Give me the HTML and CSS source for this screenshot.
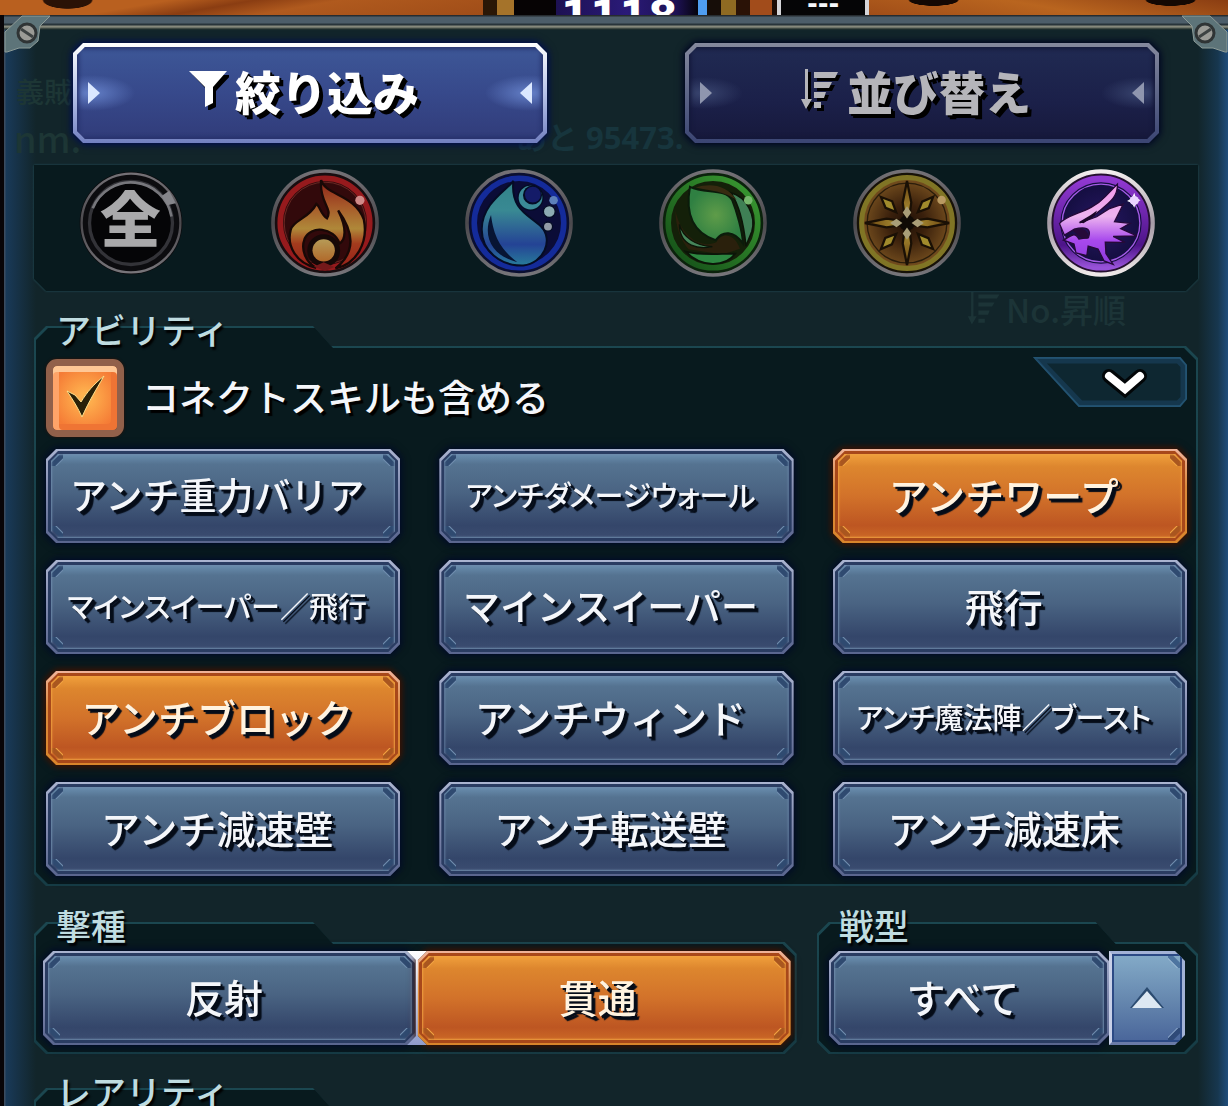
FILE: index.html
```html
<!DOCTYPE html>
<html lang="ja">
<head>
    <meta charset="UTF-8">
    <meta name="viewport" content="width=device-width, initial-scale=1.0">
    <title>絞り込み</title>
    <link rel="stylesheet" href="styles.css">
</head>
<body>
    <header class="game-bar">
        <div class="bar-side"></div>
        <div class="bar-gold"></div>
        <div class="bar-count">1118</div>
        <div class="bar-stripes"></div>
        <div class="bar-slot">---</div>
        <div class="bar-side"></div>
    </header>

    <main class="dialog">
        <!-- faded screen behind the dialog -->
        <div class="ghost" aria-hidden="true">
            <span class="ghost-title">義賊</span>
            <span class="ghost-name">nm.</span>
            <span class="ghost-rest">あと 95473.</span>
            <span class="ghost-sort">
                <svg width="40" height="42" viewBox="0 0 40 42"><path d="M4 0H7V30H11L5 40L0 30H4ZM13 3H39L36 8H13ZM13 13H33L30 18H13ZM13 23H27L25 28H13ZM13 33H21V38H13Z" fill="currentColor"/></svg>No.昇順
            </span>
        </div>

        <svg class="corner corner-left" viewBox="0 0 46 38">
            <path d="M18 1H46L36 11L34 26L26 33H15L3 37H1V17Z" fill="#5d7479" stroke="#8d9b97" stroke-width="1"/>
            <circle cx="23" cy="18" r="9" fill="#9b9b96" stroke="#2f3435" stroke-width="3"/>
            <path d="M17 14L29 22" stroke="#3d4242" stroke-width="3"/>
        </svg>
        <svg class="corner corner-right" viewBox="0 0 46 38">
            <path d="M18 1H46L36 11L34 26L26 33H15L3 37H1V17Z" fill="#5d7479" stroke="#8d9b97" stroke-width="1"/>
            <circle cx="23" cy="18" r="9" fill="#9b9b96" stroke="#2f3435" stroke-width="3"/>
            <path d="M17 14L29 22" stroke="#3d4242" stroke-width="3"/>
        </svg>

        <nav class="tabs">
            <button class="tab tab-active" type="button">
                <span class="tab-face">
                    <svg width="40" height="40" viewBox="0 0 40 40"><path d="M4 5H42L27 21V37L19 41V21Z" fill="#000"/><path d="M0 1H38L24 17V33L16 37V17Z" fill="#fff"/></svg>
                    絞り込み
                </span>
            </button>
            <button class="tab" type="button">
                <span class="tab-face">
                    <svg width="40" height="46" viewBox="0 0 40 46">
                        <path d="M4 2H7V32H11L5 42L0 32H4ZM13 5H37L34 11H13ZM13 15H31L28 21H13ZM13 25H25L23 31H13ZM13 35H20V41H13Z" fill="#000" transform="translate(3 3)"/>
                        <path d="M4 2H7V32H11L5 42L0 32H4ZM13 5H37L34 11H13ZM13 15H31L28 21H13ZM13 25H25L23 31H13ZM13 35H20V41H13Z" fill="#b5b5ba"/>
                    </svg>
                    並び替え
                </span>
            </button>
        </nav>

        <section class="elements">
            <button class="element" type="button" aria-label="全">
                <svg viewBox="138 26 328 328">
                    <circle cx="302" cy="190" r="156" fill="#0c0c0f"/>
                    <circle cx="302" cy="190" r="150" fill="none" stroke="url(#steel)" stroke-width="7"/>
                    <circle cx="302" cy="190" r="126" fill="#050507" stroke="#333338" stroke-width="10"/>
                    <path d="M186 145A125 125 0 0 1 425 170" fill="none" stroke="#77777c" stroke-width="8"/>
                    <path d="M395 108L418 92L438 130L412 136Z" fill="#85858a"/>
                    <text x="300" y="247" text-anchor="middle" class="all-mark">全</text>
                </svg>
            </button>
            <button class="element" type="button" aria-label="火">
                <svg viewBox="716 24 328 328">
                    <circle cx="880" cy="188" r="158" fill="#180d10" stroke="url(#steel)" stroke-width="11"/>
                    <circle cx="880" cy="188" r="136" fill="#32090b" stroke="#961a1d" stroke-width="17"/>
                    <circle cx="880" cy="188" r="124" fill="none" stroke="#6b2924" stroke-width="3"/>
                    <path d="M868 58C882 105 970 100 998 178C1012 248 975 313 912 326C964 285 976 227 920 150C948 206 942 240 924 250C907 201 836 194 818 236C805 270 823 308 853 324C794 310 762 260 776 208C786 177 830 176 854 130C864 137 868 163 886 174C905 143 862 127 868 58Z" fill="url(#flame)" stroke="#190806" stroke-width="7"/>
                    <circle cx="876" cy="272" r="50" fill="#160807"/>
                    <circle cx="876" cy="271" r="34" fill="url(#ember)"/>
                    <path d="M846 321L876 307L908 322L880 334Z" fill="#74191a"/>
                    <circle cx="986" cy="119" r="14" fill="#d08a88"/>
                </svg>
            </button>
            <button class="element" type="button" aria-label="水">
                <svg viewBox="69 24 328 328">
                    <circle cx="233" cy="188" r="158" fill="#0b0f30" stroke="url(#steel)" stroke-width="11"/>
                    <circle cx="233" cy="188" r="136" fill="#0b0c37" stroke="#142b9a" stroke-width="17"/>
                    <path d="M216 60C196 88 122 127 120 205C118 272 176 319 246 317C306 311 340 240 300 199C262 163 206 146 216 60Z" fill="url(#drop)" stroke="#050c25" stroke-width="6"/>
                    <path d="M148 164C121 229 150 287 228 307C180 270 157 235 148 164Z" fill="#071433"/>
                    <circle cx="268" cy="111" r="40" fill="#050c25"/>
                    <circle cx="268" cy="111" r="36" fill="#3b8a98"/>
                    <circle cx="274" cy="103" r="29" fill="#050c25"/>
                    <circle cx="275" cy="102" r="24" fill="#141b68"/>
                    <circle cx="325" cy="153" r="18" fill="#8dabb3" stroke="#050c25" stroke-width="4"/>
                    <circle cx="321" cy="199" r="14" fill="#939ba6" stroke="#050c25" stroke-width="4"/>
                    <circle cx="338" cy="119" r="13" fill="#5d80bb"/>
                </svg>
            </button>
            <button class="element" type="button" aria-label="木">
                <svg viewBox="650 24 328 328">
                    <circle cx="814" cy="188" r="158" fill="#0b220c" stroke="url(#steel)" stroke-width="11"/>
                    <circle cx="814" cy="188" r="136" fill="#142009" stroke="url(#wood)" stroke-width="17"/>
                    <path d="M868 96C915 108 946 165 932 214L914 258C908 198 898 140 868 96Z" fill="#3f8055" stroke="#0b1508" stroke-width="5"/>
                    <path d="M700 150C715 230 780 268 825 246C837 219 876 214 896 266L844 284L740 268C716 240 700 200 700 150Z" fill="#2a200c"/>
                    <path d="M712 192C722 232 764 258 812 260C775 268 712 262 712 192Z" fill="#46855a" stroke="#0b1508" stroke-width="4"/>
                    <path d="M731 275C781 288 831 281 882 281C850 323 779 324 731 275Z" fill="#2d8841" stroke="#0b1508" stroke-width="5"/>
                    <path d="M744 78C790 100 850 82 872 118C886 153 903 211 905 250C877 210 843 211 822 240C750 216 730 157 744 78Z" fill="url(#leaf)" stroke="#0b1b0b" stroke-width="6"/>
                    <path d="M762 80C808 65 855 73 886 118C849 92 811 90 762 80Z" fill="#372b11"/>
                    <circle cx="921" cy="119" r="13" fill="#76b86d"/>
                </svg>
            </button>
            <button class="element" type="button" aria-label="光">
                <svg viewBox="95 24 328 328">
                    <circle cx="259" cy="188" r="158" fill="#171208" stroke="url(#steel)" stroke-width="11"/>
                    <circle cx="259" cy="188" r="138" fill="url(#amber)" stroke="#807525" stroke-width="15"/>
                    <circle cx="259" cy="188" r="121" fill="none" stroke="#2a1d0b" stroke-width="4"/>
                    <path id="ray" d="M259 60L272 126L263 188H255L246 126Z" fill="url(#gold)" stroke="#1a1005" stroke-width="7"/>
                    <use href="#ray" transform="rotate(90 259 188)"/>
                    <use href="#ray" transform="rotate(180 259 188)"/>
                    <use href="#ray" transform="rotate(270 259 188)"/>
                    <path id="shard" d="M180 109L214 122L226 155L194 142Z" fill="#a18b2c" stroke="#1a1005" stroke-width="7"/>
                    <use href="#shard" transform="rotate(90 259 188)"/>
                    <use href="#shard" transform="rotate(180 259 188)"/>
                    <use href="#shard" transform="rotate(270 259 188)"/>
                    <circle cx="259" cy="188" r="24" fill="#100b05"/>
                    <path id="tip" d="M259 174L246 156L259 137L272 156Z" fill="#a99e78"/>
                    <use href="#tip" transform="rotate(90 259 188)"/>
                    <use href="#tip" transform="rotate(180 259 188)"/>
                    <use href="#tip" transform="rotate(270 259 188)"/>
                    <circle cx="364" cy="118" r="13" fill="#b99a61"/>
                </svg>
            </button>
            <button class="element" type="button" aria-label="闇" aria-pressed="true">
                <svg viewBox="677 24 328 328">
                    <circle cx="841" cy="188" r="157" fill="#25102f" stroke="url(#silver)" stroke-width="13"/>
                    <circle cx="841" cy="188" r="134" fill="url(#night)" stroke="url(#violet)" stroke-width="21"/>
                    <circle cx="841" cy="188" r="118" fill="none" stroke="#a45be6" stroke-width="4"/>
                    <path d="M715 190C739 158 807 159 854 108L891 70C892 110 868 125 827 159L776 188L828 169L865 145L909 130L882 184L929 189L901 205L950 227L878 229L914 247L854 246L856 281L878 314L850 303L832 267L802 258L798 287L765 279L759 252L727 240C749 229 760 211 774 237L803 232C814 201 790 199 759 207L730 225Z" fill="url(#beast)" stroke="#250a39" stroke-width="4"/>
                    <path d="M773 186L810 164L829 150L822 166L788 189Z" fill="#1b0728"/>
                    <path d="M754 209C781 198 805 208 804 234C785 242 766 222 754 209Z" fill="#260939"/>
                    <path d="M942 96L947 111L961 119L947 126L942 142L935 127L920 121L935 113Z" fill="#fff"/>
                    <circle cx="942" cy="120" r="14" fill="#ead4ff"/>
                </svg>
            </button>
        </section>

        <section class="panel panel-ability">
            <h2>アビリティ</h2>
            <div class="ability-top">
                <label class="check-label">
                    <span class="check">
                        <input type="checkbox" checked>
                        <svg viewBox="0 0 78 78"><path d="M21 32L29 36L35 43C41 33 48 25 58 17C50 31 43 42 36 58C32 49 27 41 21 32Z" fill="#2a2108" stroke="#ffe08a" stroke-width="1"/></svg>
                    </span>
                    <span class="check-text">コネクトスキルも含める</span>
                </label>
                <button class="collapse" type="button" aria-label="開く">
                    <svg viewBox="0 0 154 50">
                        <path d="M2 1H147L153 8V42L147 49H46Z" fill="#0e2731" stroke="#235371" stroke-width="2"/>
                        <path d="M8 4H145L150 9V41L145 46H48Z" fill="none" stroke="#1a4260" stroke-width="5" opacity=".6"/>
                        <path d="M76 19L92 32L107 19" fill="none" stroke="#020608" stroke-width="14" stroke-linecap="round"/>
                        <path d="M76 19L92 32L107 19" fill="none" stroke="#fff" stroke-width="8" stroke-linecap="round"/>
                    </svg>
                </button>
            </div>
            <div class="ability-grid">
                <button class="plate text-mid" type="button"><span>アンチ重力バリア</span></button>
                <button class="plate text-long" type="button"><span>アンチダメージウォール</span></button>
                <button class="plate plate-on" type="button" aria-pressed="true"><span>アンチワープ</span></button>
                <button class="plate text-long" type="button"><span>マインスイーパー／飛行</span></button>
                <button class="plate text-mid" type="button"><span>マインスイーパー</span></button>
                <button class="plate" type="button"><span>飛行</span></button>
                <button class="plate plate-on" type="button" aria-pressed="true"><span>アンチブロック</span></button>
                <button class="plate" type="button"><span>アンチウィンド</span></button>
                <button class="plate text-long" type="button"><span>アンチ魔法陣／ブースト</span></button>
                <button class="plate" type="button"><span>アンチ減速壁</span></button>
                <button class="plate" type="button"><span>アンチ転送壁</span></button>
                <button class="plate" type="button"><span>アンチ減速床</span></button>
            </div>
        </section>

        <div class="panel-row">
            <section class="panel">
                <h2>撃種</h2>
                <div class="segment">
                    <button class="plate" type="button"><span>反射</span></button>
                    <button class="plate plate-on" type="button" aria-pressed="true"><span>貫通</span></button>
                </div>
            </section>
            <section class="panel">
                <h2 id="type-title">戦型</h2>
                <div class="dropdown">
                    <div class="plate">
                        <select aria-labelledby="type-title">
                            <option>すべて</option>
                        </select>
                    </div>
                    <div class="dropdown-arrow">
                        <svg width="36" height="24" viewBox="0 0 36 24"><path d="M18 1L35 22H1Z" fill="#2b4b70"/><path d="M18 5L33 22H3Z" fill="#dde8f2"/></svg>
                    </div>
                </div>
            </section>
        </div>

        <section class="panel panel-rarity">
            <h2>レアリティ</h2>
        </section>
    </main>

    <svg class="defs" width="0" height="0" aria-hidden="true">
        <defs>
            <linearGradient id="steel" x1="0" y1="0" x2="0" y2="1"><stop offset="0" stop-color="#747176"/><stop offset=".5" stop-color="#4b494d"/><stop offset="1" stop-color="#77757a"/></linearGradient>
            <linearGradient id="silver" x1="0" y1="0" x2="0" y2="1"><stop offset="0" stop-color="#f3eeee"/><stop offset=".5" stop-color="#a49aa5"/><stop offset="1" stop-color="#efe9e9"/></linearGradient>
            <linearGradient id="flame" x1="0" y1="0" x2="0" y2="1"><stop offset="0" stop-color="#8d2118"/><stop offset=".3" stop-color="#a75a2a"/><stop offset=".55" stop-color="#af8839"/><stop offset=".72" stop-color="#a33b1d"/><stop offset="1" stop-color="#971f19"/></linearGradient>
            <linearGradient id="ember" x1="0" y1="0" x2="0" y2="1"><stop offset="0" stop-color="#b69b57"/><stop offset="1" stop-color="#b1692a"/></linearGradient>
            <linearGradient id="drop" x1="0" y1="0" x2="0" y2="1"><stop offset="0" stop-color="#328389"/><stop offset=".35" stop-color="#398993"/><stop offset=".75" stop-color="#244395"/><stop offset="1" stop-color="#287c9a"/></linearGradient>
            <linearGradient id="wood" x1="1" y1="0" x2="0" y2="1"><stop offset="0" stop-color="#3b9d32"/><stop offset="1" stop-color="#134c17"/></linearGradient>
            <radialGradient id="leaf"><stop offset="0" stop-color="#5f9c49"/><stop offset="1" stop-color="#2f8042"/></radialGradient>
            <radialGradient id="amber"><stop offset="0" stop-color="#1f1006"/><stop offset=".4" stop-color="#3a200c"/><stop offset="1" stop-color="#77501f"/></radialGradient>
            <linearGradient id="gold" x1="0" y1="0" x2="0" y2="1"><stop offset="0" stop-color="#66400f"/><stop offset="1" stop-color="#bda33b"/></linearGradient>
            <radialGradient id="night"><stop offset="0" stop-color="#271764"/><stop offset="1" stop-color="#120d3c"/></radialGradient>
            <linearGradient id="violet" x1="0" y1="0" x2="0" y2="1"><stop offset="0" stop-color="#9139d2"/><stop offset=".75" stop-color="#4d1489"/><stop offset="1" stop-color="#9752d8"/></linearGradient>
            <linearGradient id="beast" x1="0" y1="0" x2="0" y2="1"><stop offset="0" stop-color="#f398ed"/><stop offset=".4" stop-color="#edb4ef"/><stop offset=".7" stop-color="#a849ed"/><stop offset="1" stop-color="#8b39dc"/></linearGradient>
        </defs>
    </svg>
</body>
</html>
```
FILE: styles.css
```css
* {
    box-sizing: border-box;
}

body {
    margin: 0;
    height: 100vh;
    overflow: hidden;
    display: flex;
    flex-direction: column;
    background: #080508;
    color: #f4f6fa;
    font-family: "Noto Sans CJK JP", "Noto Sans", sans-serif;
    font-weight: 500;
}

button, select, input {
    font: inherit;
    color: inherit;
    margin: 0;
    padding: 0;
    border: none;
    background: none;
    cursor: pointer;
}

.defs {
    position: absolute;
}

/* strip of the game screen above the dialog */
.game-bar {
    flex: none;
    display: flex;
    height: 15px;
    overflow: hidden;
    background: #0a0606;
    font-family: "DejaVu Sans", sans-serif;
    font-weight: 700;
}

.bar-side {
    flex: 482;
    background:
        radial-gradient(ellipse 34px 12px at 14% 0, #2a1206 70%, transparent 75%),
        linear-gradient(170deg, #b9601f 30%, #8a3d12 45%, #b05a1e 60%, #a04d18);
}

.bar-side:last-child {
    flex: 358;
    background:
        radial-gradient(ellipse 34px 8px at 18% 0, #140803 70%, transparent 75%),
        radial-gradient(ellipse 34px 8px at 84% 0, #140803 70%, transparent 75%),
        linear-gradient(10deg, #a04d18, #b9651f 50%, #8a3d12);
}

.bar-gold {
    width: 73px;
    background: linear-gradient(90deg, #2a1706 14px, #a5732a 14px 31px, #060304 31px);
}

.bar-count {
    display: flex;
    align-items: flex-start;
    justify-content: center;
    width: 142px;
    padding-right: 16px;
    background: linear-gradient(90deg, #1d1152, #2a1a78 50%, #1d1152 85%, #05040c);
    color: #fff;
    font-size: 42px;
    line-height: 34px;
}

.bar-stripes {
    width: 79px;
    background: linear-gradient(90deg, #4f9df0 9px, #160d08 9px 23px, #8f6a22 23px 38px, #2a1206 38px 52px, #a24c1b 52px 74px, #1b0c05 74px);
}

.bar-slot {
    width: 92px;
    border: solid #d5d5d8;
    border-width: 0 4px;
    background: #050506;
    text-align: center;
    font-size: 26px;
    line-height: 8px;
}

/* dialog */
.dialog {
    position: relative;
    flex: 1;
    min-height: 0;
    overflow: hidden;
    margin-left: 4px;
    padding: 28px 30px 0;
    background:
        linear-gradient(#262c30 1px, #4c5d69 2px 8px, #28343a 9px 10px, #86897c 11px 12px, #26332f 14px, transparent 15px) top / 100% 24px no-repeat,
        linear-gradient(90deg, #3a4c60 1px, #193a59 2px, #17344c 10px, transparent 32px),
        linear-gradient(270deg, #1f4d7b, #17374f 10px, transparent 30px),
        #12252a;
}

.corner {
    position: absolute;
    top: 0;
    width: 46px;
    height: 38px;
}

.corner-left {
    left: 0;
}

.corner-right {
    right: 0;
    transform: scaleX(-1);
}

.ghost {
    position: absolute;
    inset: 0;
    color: #1d3635;
}

.ghost span {
    position: absolute;
}

.ghost-title {
    left: 12px;
    top: 58px;
    font-size: 28px;
    line-height: 36px;
}

.ghost-name {
    left: 10px;
    top: 100px;
    font-size: 36px;
    line-height: 44px;
}

.ghost-rest {
    left: 512px;
    top: 102px;
    font-family: "Open Sans", "Noto Sans CJK JP", sans-serif;
    font-size: 31px;
    font-weight: 700;
    line-height: 40px;
}

.ghost .ghost-rest {
    color: #17353d;
}

.ghost .ghost-sort {
    right: 102px;
    top: 274px;
    display: flex;
    align-items: center;
    gap: 2px;
    font-size: 33px;
    line-height: 40px;
    color: #1c3437;
}

.ghost-sort svg {
    height: 34px;
}

/* tabs */
.tabs {
    position: relative;
    display: flex;
    gap: 138px;
    padding: 0 39px;
}

.tab {
    position: relative;
    flex: 1;
    height: 100px;
    padding: 4px;
    font-size: 46px;
    font-weight: 900;
    color: #b5b5ba;
    filter: drop-shadow(0 0 3px #020823) drop-shadow(0 0 3px #020823);
}

.tab::before {
    content: "";
    position: absolute;
    inset: 0;
    background: linear-gradient(#85899d, #5e6688 50%, #3b4573);
    clip-path: polygon(10px 0, calc(100% - 10px) 0, 100% 10px, 100% calc(100% - 10px), calc(100% - 10px) 100%, 10px 100%, 0 calc(100% - 10px), 0 10px);
}

.tab-face {
    position: relative;
    display: flex;
    align-items: center;
    justify-content: center;
    gap: 6px;
    height: 100%;
    padding: 0 12px 6px 0;
    background:
        radial-gradient(ellipse 40px 16px at 14px 50%, #39456f, transparent),
        radial-gradient(ellipse 40px 16px at calc(100% - 14px) 50%, #39456f, transparent),
        linear-gradient(#202a52, #1b2049 60%, #17193c);
    box-shadow: inset 0 0 4px 2px #14183a;
    clip-path: polygon(8px 0, calc(100% - 8px) 0, 100% 8px, 100% calc(100% - 8px), calc(100% - 8px) 100%, 8px 100%, 0 calc(100% - 8px), 0 8px);
    text-shadow: 2px 2px 0 #000, 4px 4px 0 #000;
}

.tab-face::before, .tab-face::after {
    content: "";
    position: absolute;
    top: 35px;
    left: 11px;
    width: 12px;
    height: 22px;
    background: #8f96ae;
    clip-path: polygon(0 0, 100% 50%, 0 100%);
}

.tab-face::after {
    left: auto;
    right: 11px;
    clip-path: polygon(100% 0, 0 50%, 100% 100%);
}

.tab-active {
    color: #fff;
    filter: drop-shadow(0 0 3px #03104a) drop-shadow(0 0 3px #03104a);
}

.tab-active::before {
    background: linear-gradient(#fff, #b8c4ea 50%, #7280c0);
}

.tab-active .tab-face {
    background:
        radial-gradient(ellipse 44px 18px at 14px 50%, #6480c8, transparent),
        radial-gradient(ellipse 44px 18px at calc(100% - 14px) 50%, #6480c8, transparent),
        linear-gradient(#3d5797, #37498b 50%, #313c7a);
    box-shadow: inset 0 0 4px 2px #26316c;
}

.tab-active .tab-face::before, .tab-active .tab-face::after {
    background: #dbe8ff;
}

/* element filter */
.elements {
    position: relative;
    display: grid;
    grid-template-columns: repeat(6, 1fr);
    justify-items: center;
    margin-top: 22px;
    padding: 4px 0 14px;
    filter: drop-shadow(0 0 1px #24555f);
}

.elements::before {
    content: "";
    position: absolute;
    inset: 0;
    background: #081a1e;
    clip-path: polygon(0 0, 100% 0, 100% calc(100% - 12px), calc(100% - 12px) 100%, 12px 100%, 0 calc(100% - 12px));
}

.element {
    position: relative;
    width: 108px;
    height: 108px;
    border-radius: 50%;
}

.element svg {
    display: block;
    width: 100%;
}

.all-mark {
    fill: #a9a9ab;
    font-size: 184px;
    font-weight: 900;
}

/* panels with a raised tab at the top left */
.panel {
    position: relative;
    z-index: 0;
    display: flow-root;
    margin-top: 36px;
}

.panel::before, .panel::after {
    content: "";
    position: absolute;
    z-index: -1;
    inset: 0;
    background: linear-gradient(#1b4750, #163c45);
    clip-path: polygon(0 12px, 12px 0, 279px 0, 297px 20px, calc(100% - 12px) 20px, 100% 32px, 100% calc(100% - 12px), calc(100% - 12px) 100%, 12px 100%, 0 calc(100% - 12px));
}

.panel::after {
    inset: 2px;
    background: #081a1e;
}

.panel h2 {
    width: max-content;
    margin: -15px 0 0 22px;
    font-size: 35px;
    line-height: 36px;
    font-weight: 500;
    color: #bfdce0;
    text-shadow: 2px 3px 2px #000;
}

.panel-ability {
    padding: 0 11px 10px 12px;
    margin-top: 35px;
}

.panel-ability h2 {
    margin-left: 10px;
}

.ability-top {
    display: flex;
    justify-content: space-between;
    align-items: flex-start;
    margin-top: 10px;
}

.check-label {
    display: flex;
    align-items: center;
    gap: 18px;
    padding-top: 2px;
    font-size: 37px;
    text-shadow: 3px 3px 1px #000;
    cursor: pointer;
}

.check-text {
    padding-bottom: 4px;
}

.check {
    position: relative;
    width: 78px;
    height: 78px;
}

.check input {
    display: block;
    appearance: none;
    width: 78px;
    height: 78px;
    border: 7px solid #91604a;
    border-radius: 11px;
    background: radial-gradient(circle, #ffb34f 10%, #f57c36 75%);
    background-clip: padding-box;
    box-shadow: inset 0 6px 0 #ffc795, inset 6px 0 0 #ffa469, inset -6px -6px 0 #ef7434, 0 0 3px #321005;
}

.check input:not(:checked) + svg {
    display: none;
}

.check svg {
    position: absolute;
    inset: 0;
    pointer-events: none;
}

.collapse {
    width: 154px;
    height: 50px;
}

.collapse svg {
    display: block;
}

.ability-grid {
    display: grid;
    grid-template-columns: repeat(3, 1fr);
    gap: 17px 39px;
    margin-top: 12px;
}

/* metal plate buttons */
.plate {
    --edge: linear-gradient(#aab4d0, #8790b4 40%, #59658e);
    --rim: #2a3c62;
    --face: linear-gradient(#6a8fb0, #557391 12%, #4a6483 45%, #34466a 85%, #3b4c70);
    --notch: #2f4a70;
    --shine: #6e8bac;
    position: relative;
    height: 94px;
    padding: 5px;
    font-size: 39px;
    filter: drop-shadow(0 0 3px #020c26) drop-shadow(0 0 3px #020c26);
}

.plate::before, .plate::after {
    content: "";
    position: absolute;
    inset: 0;
    background: var(--edge);
    clip-path: polygon(10px 0, calc(100% - 10px) 0, 100% 10px, 100% calc(100% - 10px), calc(100% - 10px) 100%, 10px 100%, 0 calc(100% - 10px), 0 10px);
}

.plate::after {
    inset: 2px;
    background: var(--rim);
}

.plate > * {
    position: relative;
    z-index: 1;
    display: flex;
    align-items: center;
    justify-content: center;
    width: 100%;
    height: 100%;
    padding: 0 12px 4px 0;
    background:
        linear-gradient(135deg, transparent 6px, var(--notch) 7px 11px, var(--shine) 12px, transparent 13px) 0 0 / 12px 12px no-repeat,
        linear-gradient(225deg, transparent 6px, var(--notch) 7px 11px, var(--shine) 12px, transparent 13px) 100% 0 / 12px 12px no-repeat,
        linear-gradient(45deg, transparent 6px, var(--notch) 7px 11px, var(--shine) 12px, transparent 13px) 0 100% / 12px 12px no-repeat,
        linear-gradient(315deg, transparent 6px, var(--notch) 7px 11px, var(--shine) 12px, transparent 13px) 100% 100% / 12px 12px no-repeat,
        var(--face);
    box-shadow: inset 0 0 2px 1px var(--shine);
    clip-path: polygon(7px 0, calc(100% - 7px) 0, 100% 7px, 100% calc(100% - 7px), calc(100% - 7px) 100%, 7px 100%, 0 calc(100% - 7px), 0 7px);
    text-shadow: 2px 2px 0 #050c18, 4px 4px 1px #050c18;
    white-space: nowrap;
}

.plate-on {
    --edge: linear-gradient(#efb39a, #dd8b3c 40%, #d9852b);
    --rim: #a8481a;
    --face: linear-gradient(#f0a03c, #dd862e 15%, #d2722a 50%, #bd5622 85%, #cb6826);
    --notch: #a9561f;
    --shine: #f0a140;
    color: #fff3e0;
    filter: drop-shadow(0 0 3px #3a1203) drop-shadow(0 0 3px #3a1203);
}

.text-mid {
    font-size: 37px;
}

/* long names use the font's proportional kana */
.text-long {
    font-size: 29px;
    font-feature-settings: "palt";
}

.panel-row {
    display: grid;
    grid-template-columns: 2fr 1fr;
    gap: 20px;
    margin-top: 36px;
}

.panel-row .panel {
    margin-top: 0;
    padding-bottom: 9px;
}

.segment {
    position: relative;
    display: grid;
    grid-template-columns: 1fr 1fr;
    margin: 8px 6px 0 9px;
}

/* bright seam where the two plates meet */
.segment::after {
    content: "";
    position: absolute;
    top: 0;
    bottom: 0;
    left: calc(50% - 10px);
    width: 20px;
    background: linear-gradient(#fff, #8f9ccb);
    clip-path: polygon(0 0, 100% 0, 11px 9px, 11px calc(100% - 9px), 100% 100%, 0 100%, 9px calc(100% - 9px), 9px 9px);
}

.dropdown {
    position: relative;
    display: flex;
    margin: 8px 13px 0 12px;
}

.dropdown .plate {
    flex: 1;
}

.dropdown select {
    appearance: none;
    text-align: center;
    text-align-last: center;
}

.dropdown-arrow {
    display: flex;
    align-items: center;
    justify-content: center;
    width: 76px;
    border: 3px solid #a3b2d6;
    border-bottom-color: #6a7ba8;
    border-left-color: #c8d0e8;
    background:
        linear-gradient(225deg, transparent 7px, #4d74a0 8px 12px, #9fbcd6 13px, transparent 14px) 100% 0 / 14px 14px no-repeat,
        linear-gradient(315deg, transparent 7px, #2f4a78 8px 12px, #8ea9cc 13px, transparent 14px) 100% 100% / 14px 14px no-repeat,
        linear-gradient(#84abc8, #6789b0 50%, #49659a);
    box-shadow: inset 0 0 0 2px #2c4a85;
    clip-path: polygon(0 0, calc(100% - 10px) 0, 100% 10px, 100% calc(100% - 10px), calc(100% - 10px) 100%, 0 100%);
    pointer-events: none;
}

.panel-rarity {
    margin-top: 34px;
    height: 120px;
}
```
